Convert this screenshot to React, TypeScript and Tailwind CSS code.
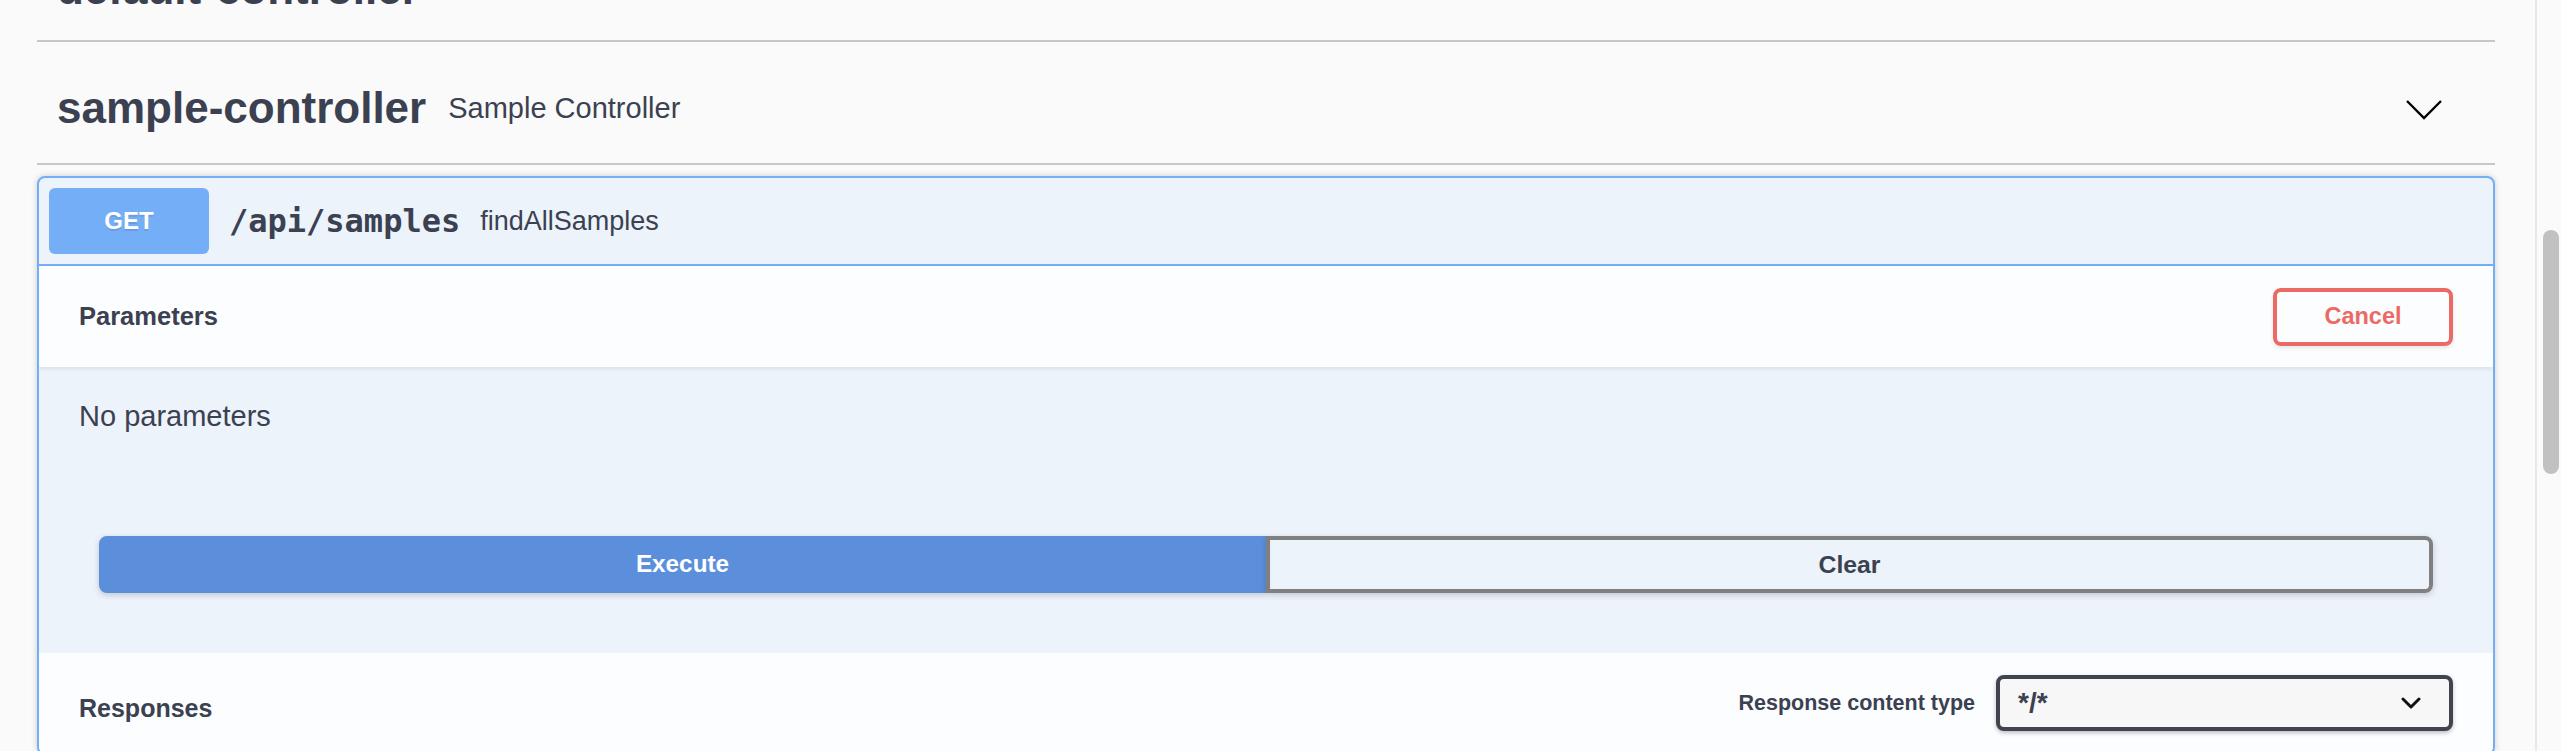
import React from 'react'

function Chevron({ className }: { className?: string }) {
  return (
    <svg className={className} width="38" height="22" viewBox="0 0 38 22" fill="none">
      <polyline points="2,2 19,19 36,2" stroke="#000" strokeWidth="2.4" strokeLinejoin="miter" />
    </svg>
  )
}

function SmallChevron() {
  return (
    <svg width="20" height="12" viewBox="0 0 20 12" fill="none">
      <polyline points="2,2 10,10 18,2" stroke="#111" strokeWidth="3" strokeLinecap="round" strokeLinejoin="round" />
    </svg>
  )
}

export default function App() {
  return (
    <div className="flex h-[751px] overflow-hidden bg-[#fafafa] font-['Liberation_Sans',Arial,sans-serif] text-[#3b4151]">
      <main className="flex-1 min-w-0 pl-[37px] pr-[36px] flex flex-col">
        {/* previous tag, scrolled mostly out of view */}
        <div className="h-[42px] shrink-0 border-b-2 border-[#c6c7cb] pl-[20px]">
          <span className="block mt-[-33px] text-[44px] leading-none font-bold">default-controller</span>
        </div>

        {/* sample-controller tag */}
        <div className="h-[123px] shrink-0 border-b-2 border-[#c6c7cb] flex items-center justify-between pl-[20px] pr-[52px]">
          <div className="flex items-center mt-[10px]">
            <h4 className="text-[44px] leading-none font-bold">sample-controller</h4>
            <small className="pl-[22px] text-[29px] leading-none mt-[2px]">Sample Controller</small>
          </div>
          <Chevron className="mt-[14px]" />
        </div>

        {/* opblock */}
        <div className="mt-[11px] shrink-0 rounded-[8px] border-2 border-[#74aef7] bg-[#ecf3fb] shadow-[0_0_6px_rgba(0,0,0,0.19)] overflow-hidden">
          <div className="flex items-center p-[10px] border-b-2 border-[#74aef7]">
            <span className="w-[160px] h-[66px] rounded-[6px] bg-[#74aef7] flex items-center justify-center text-white text-[24px] font-bold [text-shadow:0_2px_0_rgba(0,0,0,0.1)]">
              GET
            </span>
            <span className="px-[20px] font-['DejaVu_Sans_Mono',monospace] text-[32px] font-semibold leading-none">
              /api/samples
            </span>
            <span className="text-[27px] leading-none">findAllSamples</span>
          </div>

          <div className="h-[101px] flex items-center justify-between px-[40px] bg-[#fcfdfe] shadow-[0_2px_4px_rgba(0,0,0,0.08)] relative">
            <h4 className="text-[25.5px] font-bold">Parameters</h4>
            <button className="w-[180px] h-[58px] rounded-[8px] border-4 border-[#ec6a65] text-[#ec6a65] text-[23.5px] font-bold shadow-[0_2px_4px_rgba(0,0,0,0.1)]">
              Cancel
            </button>
          </div>

          <div className="px-[40px] pt-[30px]">
            <p className="text-[29px] leading-[38px]">No parameters</p>
          </div>

          <div className="flex px-[60px] pt-[101px] pb-[60px]">
            <button className="flex-1 h-[57px] rounded-l-[8px] border-4 border-[#5b8fdc] bg-[#5b8fdc] text-white text-[24.3px] font-bold shadow-[0_2px_6px_rgba(0,0,0,0.18)]">
              Execute
            </button>
            <button className="flex-1 h-[57px] rounded-r-[8px] border-4 border-[#808080] text-[#3b4151] text-[24.8px] font-bold shadow-[0_2px_6px_rgba(0,0,0,0.18)]">
              Clear
            </button>
          </div>

          <div className="h-[100px] flex items-center justify-between px-[40px] bg-[#fcfdfe]">
            <h4 className="text-[25px] font-bold mt-[12px]">Responses</h4>
            <div className="flex items-center">
              <span className="text-[21.5px] font-bold mr-[21px]">Response content type</span>
              <div className="w-[457px] h-[56px] rounded-[8px] border-4 border-[#41444e] bg-[#f7f7f7] shadow-[0_2px_4px_rgba(0,0,0,0.25)] flex items-center justify-between pl-[18px] pr-[28px]">
                <span className="text-[28px] font-bold">*/*</span>
                <SmallChevron />
              </div>
            </div>
          </div>
        </div>
      </main>

      {/* scrollbar */}
      <aside className="w-[30px] shrink-0 pl-[4px]">
        <div className="h-full border-l-2 border-[#e8e8e8] pl-[6px] pt-[230px]">
          <div className="w-[16px] h-[244px] rounded-full bg-[#c1c1c1]" />
        </div>
      </aside>
    </div>
  )
}
